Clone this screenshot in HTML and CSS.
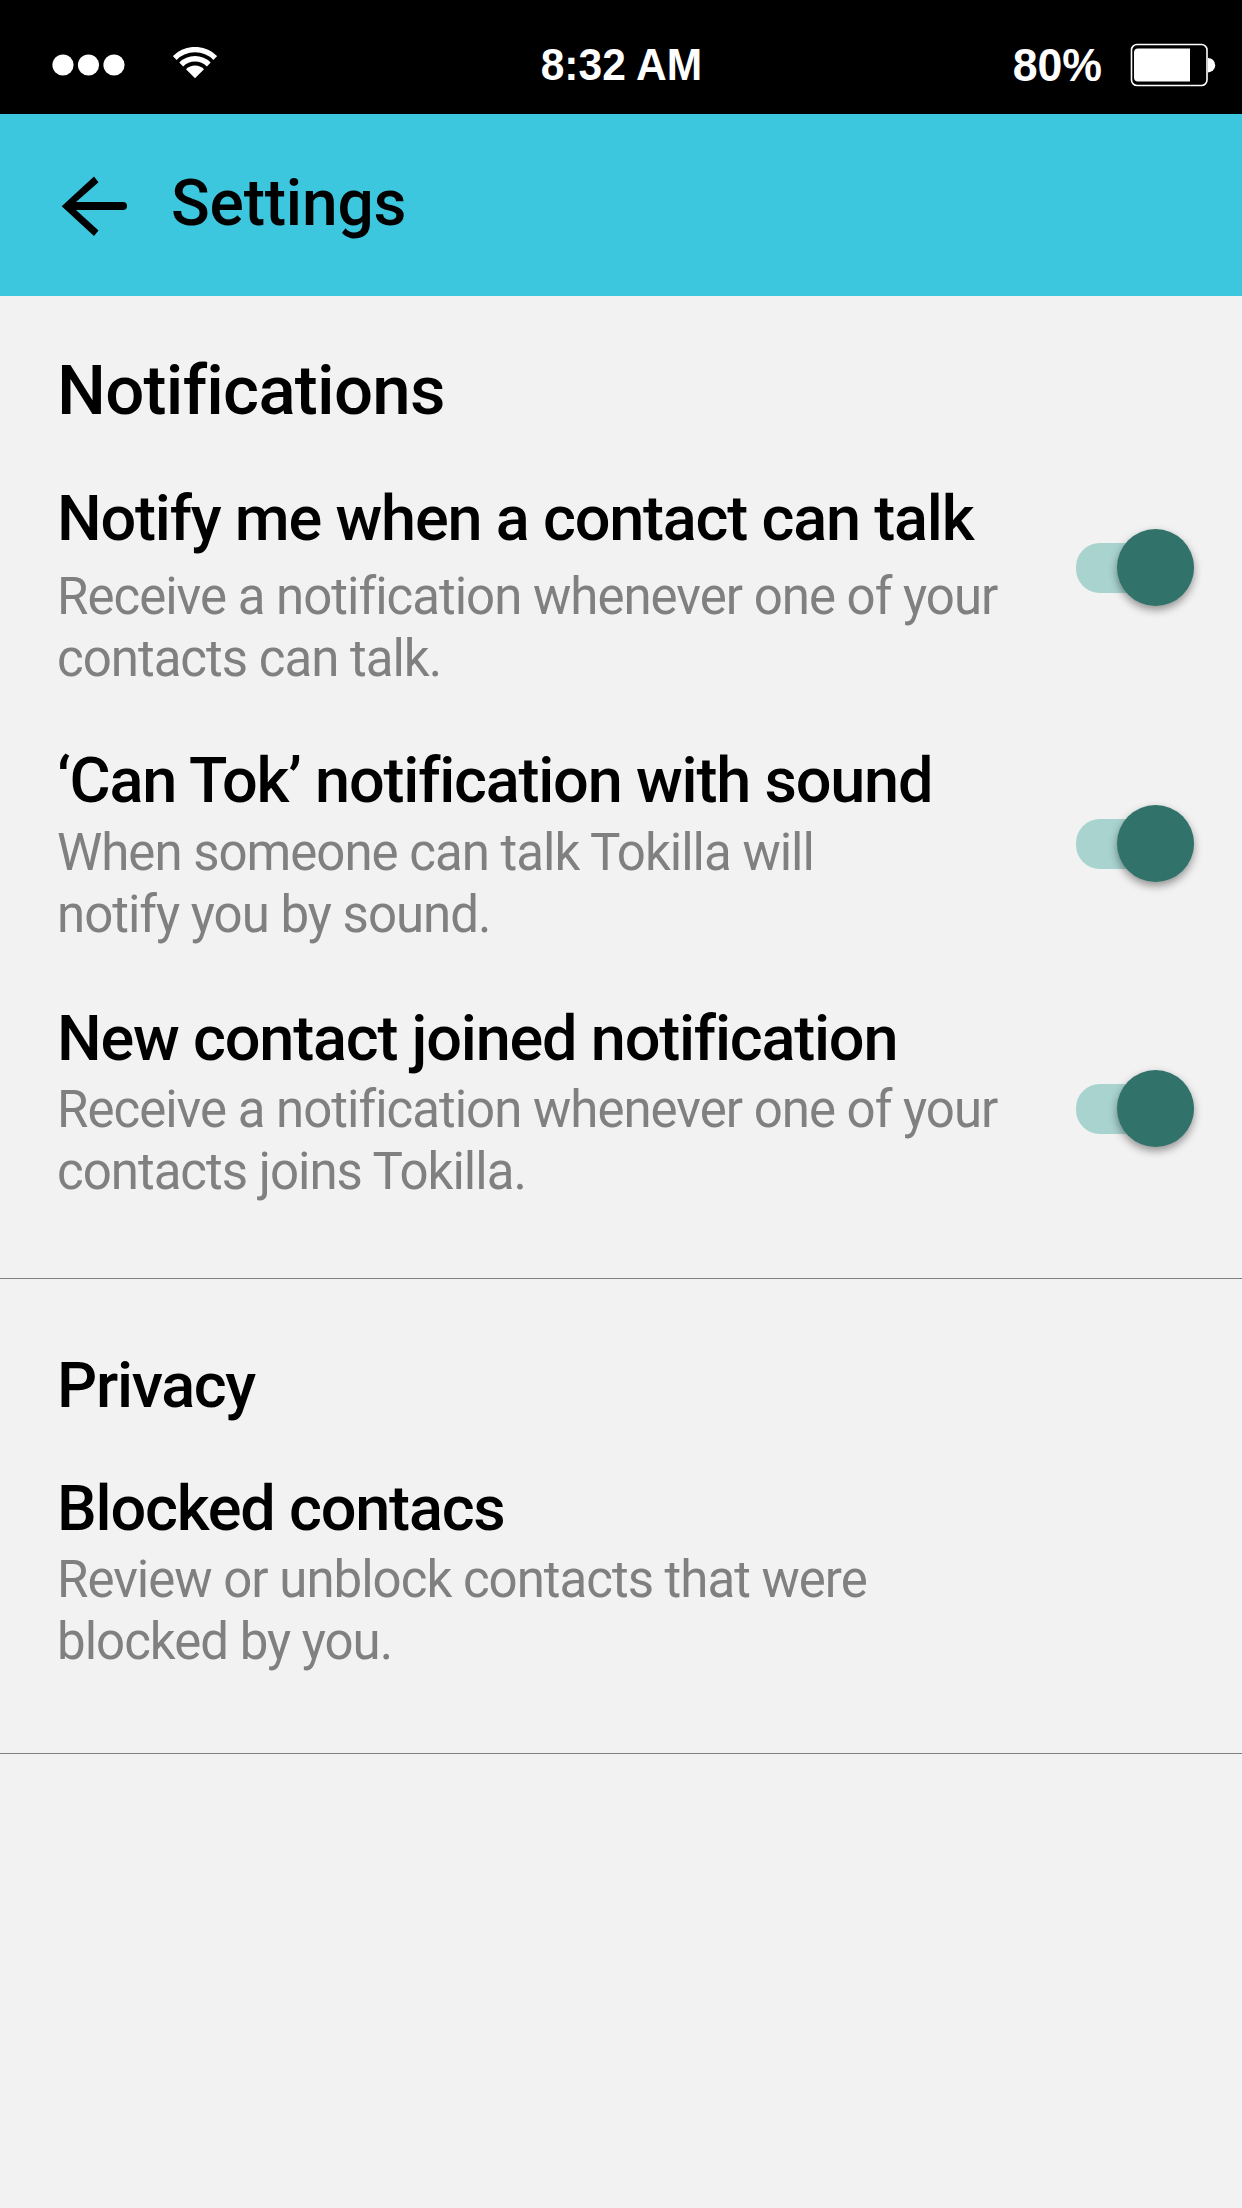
FILE: index.html
```html
<!DOCTYPE html>
<html lang="en">
<head>
  <meta charset="UTF-8">
  <title>Settings</title>
  <link rel="stylesheet" href="styles.css">
</head>
<body>

  <div class="statusbar">
    <div class="signal">
      <svg class="dots" viewBox="0 0 74 22"><circle cx="11" cy="11" r="10.6"/><circle cx="36.5" cy="11" r="10.6"/><circle cx="62" cy="11" r="10.6"/></svg>
      <svg class="wifi" viewBox="0 0 44 32">
        <path d="M1.7 11a28.7 28.7 0 0 1 40.6 0" />
        <path d="M8.2 17.5a19.5 19.5 0 0 1 27.6 0" />
        <path class="fill" d="M13 22.3a12.7 12.7 0 0 1 18 0l-9 9z" />
      </svg>
    </div>
    <div class="time">8:32 AM</div>
    <div class="power">
      <span>80%</span>
      <svg class="battery" viewBox="0 0 86 44">
        <rect class="case" x="1.5" y="1.5" width="75.5" height="41" rx="5.5" />
        <path d="M60 5.5H8a4 4 0 0 0-4 4v25a4 4 0 0 0 4 4h52z" />
        <path d="M78 15a7.2 7.2 0 0 1 0 14.4z" />
      </svg>
    </div>
  </div>

  <header class="toolbar">
    <svg class="back" viewBox="0 0 66 60">
      <path d="M33 .5L.7 30.2 33 60l4.5-5.5L15 34h47a4 4 0 0 0 0-8H15L37.5 6.2z" />
    </svg>
    <h1>Settings</h1>
  </header>

  <section class="group notifications">
    <h2>Notifications</h2>
    <div class="item talk">
      <div class="text">
        <h3>Notify me when a contact can talk</h3>
        <p>Receive a notification whenever one of your<br>contacts can talk.</p>
      </div>
      <div class="switch"></div>
    </div>
    <div class="item sound">
      <div class="text">
        <h3>‘Can Tok’ notification with sound</h3>
        <p>When someone can talk Tokilla will<br>notify you by sound.</p>
      </div>
      <div class="switch"></div>
    </div>
    <div class="item joined">
      <div class="text">
        <h3>New contact joined notification</h3>
        <p>Receive a notification whenever one of your<br>contacts joins Tokilla.</p>
      </div>
      <div class="switch"></div>
    </div>
  </section>

  <section class="group privacy">
    <h2>Privacy</h2>
    <div class="item">
      <div class="text">
        <h3>Blocked contacs</h3>
        <p>Review or unblock contacts that were<br>blocked by you.</p>
      </div>
    </div>
  </section>

</body>
</html>
```

FILE: styles.css
```css
* {
  box-sizing: border-box;
}

body {
  margin: 0;
  background: #f2f2f2;
  color: #000;
  font-family: Roboto, sans-serif;
}

h1, h2, h3, p {
  margin: 0;
  font-weight: 500;
  white-space: nowrap;
}

.statusbar {
  display: grid;
  grid-template-columns: 1fr auto 1fr;
  align-items: center;
  height: 114px;
  padding-top: 15px;
  background: #000;
  color: #fff;
  fill: #fff;
  font: bold 45px "Liberation Sans", Arial, sans-serif;
}

.signal, .power {
  display: flex;
  align-items: center;
}

.signal { padding-left: 52px; }
.power {
  justify-content: flex-end;
  gap: 28px;
  padding-right: 26px;
}
.time { transform: scaleX(.945); }
.power span {
  font-size: 47px;
  transform: scaleX(.95);
  transform-origin: right;
}
.dots { width: 74px; height: 22px; }
.wifi {
  width: 44px;
  height: 32px;
  margin-left: 47px;
  margin-top: -3px;
}
.wifi path { fill: none; stroke: #fff; stroke-width: 5.4; }
.wifi .fill { fill: #fff; stroke: none; }
.battery { width: 86px; height: 44px; }
.battery .case { fill: none; stroke: #fff; stroke-width: 1.6; }

.toolbar {
  display: flex;
  align-items: center;
  height: 182px;
  padding-left: 61px;
  background: #3cc7df;
}

.toolbar h1 {
  margin: 0 0 3px 44px;
  font-size: 64px;
  letter-spacing: -0.2px;
}

.back {
  width: 66px;
  height: 60px;
  margin-top: 2px;
}

.group {
  padding: 0 48px 0 57px;
  border-bottom: 1px solid #808080;
}

.notifications { height: 983px; padding-top: 55px; }
.privacy { height: 475px; padding-top: 67px; }

h2 {
  height: 131px;
  font-size: 69px;
  line-height: 80px;
  letter-spacing: -0.75px;
}

.privacy h2 {
  height: 126px;
  font-size: 63px;
  letter-spacing: -1.3px;
}

.item {
  display: flex;
  justify-content: space-between;
}

h3 {
  font-size: 63px;
  line-height: 74px;
  letter-spacing: -1.2px;
}

p {
  margin-top: 3px;
  color: #808080;
  font-size: 51px;
  font-weight: 400;
  line-height: 62px;
  letter-spacing: -1px;
}

.talk { height: 262px; }
.sound { height: 258px; }
.talk p { margin-top: 10px; }
.sound p { margin-top: 4px; }

.switch {
  position: relative;
  width: 118px;
  height: 50px;
  border-radius: 24px;
  background: #a9d3cf;
}

.talk .switch { margin-top: 61px; }
.sound .switch { margin-top: 75px; }
.joined .switch { margin-top: 82px; }

.switch::after {
  content: "";
  position: absolute;
  top: -14px;
  right: 0;
  width: 77px;
  height: 77px;
  border-radius: 50%;
  background: #31736b;
  box-shadow: 0 4px 8px rgba(0, 0, 0, .4);
}
```
